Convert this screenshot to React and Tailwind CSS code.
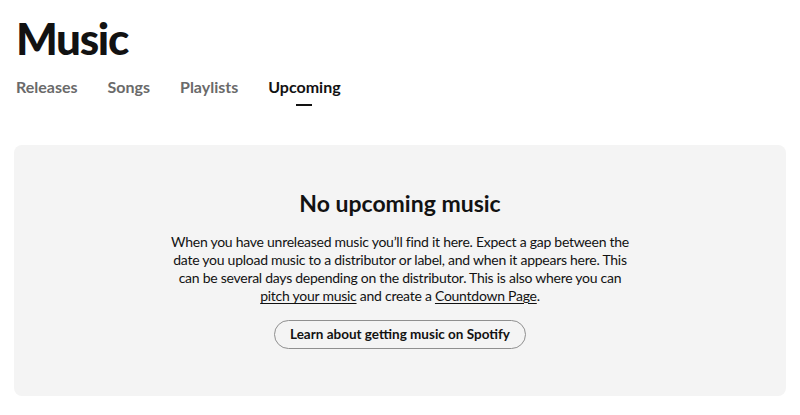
export default function App() {
  const tabs = ['Releases', 'Songs', 'Playlists', 'Upcoming'];
  return (
    <div className="min-h-screen bg-white px-[14px] pt-[12px] font-['Lato',sans-serif] text-[#121212]">
      <h1 className="pl-[2px] text-[44px] font-black leading-[52px] tracking-[-0.03em]">Music</h1>
      <nav className="mt-[13px] flex gap-[30px] pl-[2px]">
        {tabs.map((t) => (
          <div key={t} className="flex flex-col items-center">
            <span className={`text-[16px] font-bold leading-[20px] ${t === 'Upcoming' ? 'text-[#121212]' : 'text-[#6a6a6a]'}`}>{t}</span>
            <span className={`mt-[7px] h-[2px] w-[16px] ${t === 'Upcoming' ? 'bg-[#121212]' : 'bg-transparent'}`} />
          </div>
        ))}
      </nav>
      <section className="mt-[39px] flex flex-col items-center rounded-[8px] bg-[#f4f4f4] pt-[44px] pb-[47px]">
        <h2 className="text-[23px] font-bold leading-[28px]">No upcoming music</h2>
        <p className="mt-[16px] text-center text-[14px] leading-[18px] tracking-[-0.26px] text-[#121212]">
          When you have unreleased music you’ll find it here. Expect a gap between the<br />
          date you upload music to a distributor or label, and when it appears here. This<br />
          can be several days depending on the distributor. This is also where you can<br />
          <a className="underline underline-offset-2">pitch your music</a> and create a <a className="underline underline-offset-2">Countdown Page</a>.
        </p>
        <button className="mt-[15px] h-[29px] rounded-full border border-[#8f8f8f] px-[15px] text-[13.5px] font-bold text-[#121212]">
          Learn about getting music on Spotify
        </button>
      </section>
    </div>
  );
}
